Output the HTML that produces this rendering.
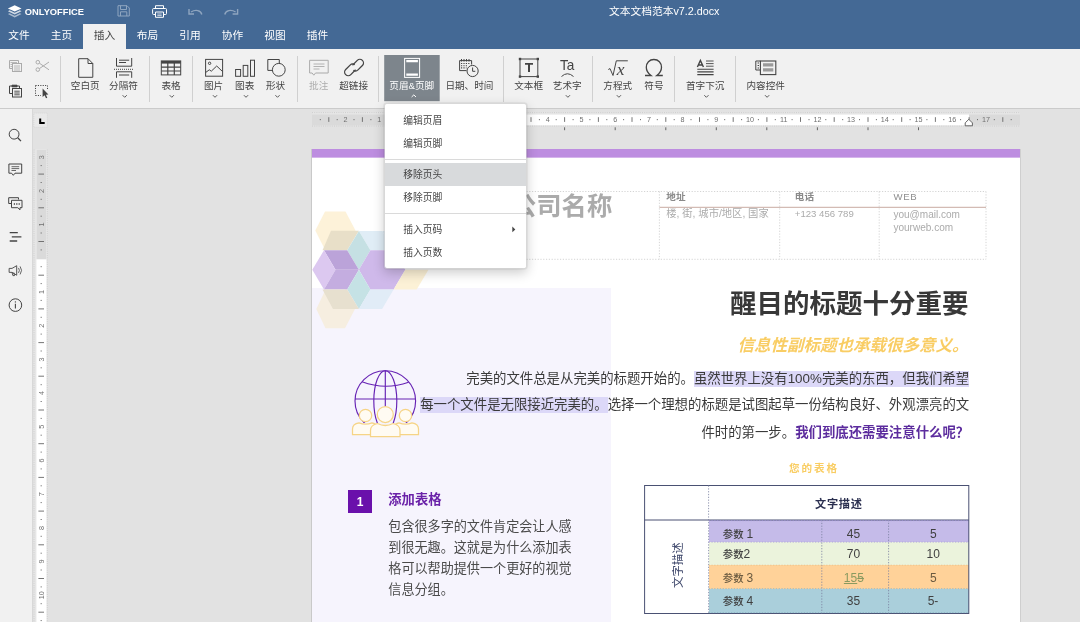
<!DOCTYPE html>
<html lang="zh-CN">
<head>
<meta charset="utf-8">
<title>文本文档范本v7.2.docx</title>
<style>
*{box-sizing:border-box;margin:0;padding:0}
html,body{width:1080px;height:622px;overflow:hidden;background:#e2e2e2}
body{position:relative;font-family:"Liberation Sans","Noto Sans CJK SC",sans-serif;color:#444;font-size:9.6px}
.abs{position:absolute}
#hdr{left:0;top:0;width:1080px;height:49px;background:#446995}
#title{left:0;top:4.3px;width:1080px;padding-left:248.4px;text-align:center;color:#fff;font-size:10.75px;line-height:14px;white-space:nowrap}
.tab{top:24px;height:25px;line-height:23px;color:#fff;font-size:10.7px;text-align:center;white-space:nowrap}
.tab.act{background:#f1f1f1;color:#444}
#tb{left:0;top:49px;width:1080px;height:60px;background:#f1f1f1;border-bottom:1px solid #cbcbcb}
.sep{top:56px;width:1px;height:46px;background:#d8d8d8}
.lbl{top:79.7px;font-size:9.6px;line-height:12px;text-align:center;white-space:nowrap;color:#444;transform:translateX(-50%)}
.car{top:95px;width:7px;height:5px;transform:translateX(-50%)}
.ic{overflow:visible}
#left{left:0;top:109px;width:32.5px;height:513px;background:#f1f1f1;border-right:1px solid #d8d8d8}
#page{left:312px;top:149px;width:708px;height:473px;background:#fff;overflow:hidden}
.doc{font-family:"Liberation Sans","Noto Sans CJK SC",sans-serif;white-space:nowrap}
.para{right:50.8px;text-align:right;font-size:13.4px;line-height:18px;color:#3a3a3a}
.hl{background:#dcd8f8;padding:0 0 1px 0}
.body{left:76.3px;font-size:13.1px;line-height:18px;color:#4a4a4a}
.cell{font-size:10.4px;line-height:12px;color:#404040;font-weight:500}
.num{font-size:12px;line-height:14px;color:#404040;transform:translateX(-50%)}
#menu{left:384px;top:103px;width:143px;height:166px;background:#fff;border:1px solid rgba(255,255,255,.45);border-radius:3px;box-shadow:0 4px 12px rgba(0,0,0,.2),0 0 1.5px rgba(0,0,0,.25);background-clip:padding-box}
.mi{left:0;width:141px;height:23px;line-height:23.6px;padding-left:18.3px;font-size:9.75px;color:#444;white-space:nowrap}
.msep{left:0;width:141px;height:1px;background:#dadada}
</style>
</head>
<body>
<div id="root" class="abs" style="left:0;top:0;width:1080px;height:622px;will-change:transform">
<!-- document canvas -->
<div id="page" class="abs doc">
<div class="abs" style="left:0;top:0;width:708px;height:9px;background:#bd8de0;border-bottom:1px solid #d5b5eb"></div>
<div class="abs" style="left:0;top:139.3px;width:298.7px;height:340px;background:#f6f4fd"></div>
<!-- hex logo -->
<svg class="abs ic" style="left:0;top:0" width="140" height="200" viewBox="312 149 140 200" stroke="none">
<polygon fill="#fdf2d9" points="325,211.5 345.5,211.5 355.5,230.5 345.5,249.8 325,249.8 315.3,230.5"/>
<polygon fill="#e8dfc8" points="331,230.7 358.9,230.7 347.2,250.2 322.5,250.2"/>
<polygon fill="#e0edf6" points="358.9,230.9 382.1,230.9 393.6,250.2 370.4,250.2"/>
<polygon fill="#e0edf6" points="382.1,230.9 405.3,230.9 416.7,250.2 393.6,250.2"/>
<polygon fill="#c5e0e3" points="358.9,230.9 370.4,250.2 358.9,269.8 347.2,250.2"/>
<polygon fill="#cfb9ea" points="370.4,250.2 393.6,250.2 405.3,269.8 393.6,289.4 370.4,289.4 358.9,269.8"/>
<polygon fill="#fcf1d6" points="405.3,269.8 428.4,269.8 416.7,289.4 393.6,289.4"/>
<polygon fill="#bba3d9" points="324,250.2 347.2,250.2 358.9,269.8 335.5,269.8"/>
<polygon fill="#dcc8f0" points="324,250.2 335.5,269.8 324,289.4 312.3,269.8"/>
<polygon fill="#c4ade0" points="335.5,269.8 358.9,269.8 347.2,289.4 324,289.4"/>
<polygon fill="#c5e2e5" points="358.9,269.8 370.4,289.4 358.9,309 347.2,289.4"/>
<polygon fill="#e1ecf7" points="370.4,289.4 393.6,289.4 382.1,309 358.9,309"/>
<polygon fill="#f6eee0" points="325.5,289.8 345,289.8 355,309 345,328.2 325.5,328.2 316.3,309"/>
<polygon fill="#e7e0cf" points="322.5,289.4 347.2,289.4 358.9,309 333,309"/>
</svg>
<!-- header -->
<div class="abs" style="left:199px;top:41px;font-size:25.3px;line-height:32px;color:#ababab;font-weight:700">公司名称</div>
<svg class="abs ic" style="left:0;top:0" width="708" height="120" viewBox="312 149 708 120" fill="none" stroke="#c9c9c9" stroke-width=".8" stroke-dasharray="1.2 1.6">
<path d="M420 191.5 H986 M420 259.3 H986 M659.4 191.5 V259.3 M779.7 191.5 V259.3 M879.2 191.5 V259.3 M986 191.5 V259.3"/>
<path d="M659.4 207.3 H986" stroke="#c8aaa2" stroke-dasharray="none" stroke-width="1"/>
</svg>
<div class="abs" style="left:354.3px;top:42px;font-size:9.6px;line-height:12px;color:#8a8a8a;font-weight:bold">地址</div>
<div class="abs" style="left:482.8px;top:42px;font-size:9.6px;line-height:12px;color:#8a8a8a;font-weight:bold">电话</div>
<div class="abs" style="left:581.4px;top:42px;font-size:9.6px;line-height:12px;color:#8f8f8f;letter-spacing:.7px">WEB</div>
<div class="abs" style="left:354.3px;top:59px;font-size:10.3px;line-height:12px;color:#ababab">楼, 街, 城市/地区, 国家</div>
<div class="abs" style="left:482.8px;top:59px;font-size:9.6px;line-height:12px;color:#ababab">+123 456 789</div>
<div class="abs" style="left:581.4px;top:58.5px;font-size:10.05px;line-height:13px;color:#ababab">you@mail.com<br>yourweb.com</div>
<!-- title -->
<div class="abs" style="right:51.5px;top:137.3px;font-size:26.5px;line-height:36px;font-weight:bold;color:#383838;text-align:right">醒目的标题十分重要</div>
<div class="abs" style="right:51.5px;top:184px;font-size:16.5px;line-height:24px;font-weight:bold;font-style:italic;color:#f9cd64;text-align:right">信息性副标题也承载很多意义。</div>
<div class="abs para" style="top:220.6px">完美的文件总是从完美的标题开始的。<span class="hl">虽然世界上没有100%完美的东西，但我们希望</span></div>
<div class="abs para" style="top:247.3px"><span class="hl">每一个文件是无限接近完美的。</span>选择一个理想的标题是试图起草一份结构良好、外观漂亮的文</div>
<div class="abs para" style="top:274.5px">件时的第一步。<b style="color:#5c2c9e">我们到底还需要注意什么呢？</b></div>
<!-- globe icon -->
<svg class="abs ic" style="left:36px;top:216px" width="76" height="76" viewBox="348 365 76 76" fill="none" stroke="#6622b4" stroke-width="1.15">
<clipPath id="gc"><rect x="348" y="365" width="76" height="58"/></clipPath><g clip-path="url(#gc)"><circle cx="385.3" cy="401" r="30.3"/><ellipse cx="385.3" cy="401" rx="11.5" ry="30.3"/><path d="M385.3 370.7 V431 M355 399 H415.6 M362 381.8 Q385.3 390.5 408.6 382.2"/></g>
<g stroke="#f6d486" fill="#fffbf2" stroke-width="1.25">
<circle cx="365.5" cy="415.5" r="6.2"/><path d="M352.5 434.5 V429 Q352.5 423.8 359 422.8 Q365.5 425.5 372 422.8 Q376 423.5 377.5 427 V434.5 Z"/>
<circle cx="405.5" cy="415.5" r="6.2"/><path d="M393.5 434.5 V427 Q395 423.5 399 422.8 Q405.5 425.5 412 422.8 Q418.5 423.8 418.5 429 V434.5 Z"/>
<circle cx="385.3" cy="414.5" r="8"/><path d="M370.5 436.5 V430.5 Q370.5 425 377.5 423.5 Q385.3 427.5 393 423.5 Q400 425 400 430.5 V436.5 Z"/>
</g>
</svg>
<!-- section 1 -->
<div class="abs" style="left:36.3px;top:341px;width:23.4px;height:23.3px;background:#6a10ab;color:#fff;font-weight:bold;font-size:12px;line-height:25.4px;text-align:center">1</div>
<div class="abs" style="left:76.3px;top:341.5px;font-size:13.3px;line-height:18px;font-weight:bold;color:#6a22a8">添加表格</div>
<div class="abs body" style="top:368.8px">包含很多字的文件肯定会让人感</div>
<div class="abs body" style="top:390.1px">到很无趣。这就是为什么添加表</div>
<div class="abs body" style="top:411.1px">格可以帮助提供一个更好的视觉</div>
<div class="abs body" style="top:432.1px">信息分组。</div>
<!-- table -->
<div class="abs" style="left:477px;top:313.1px;font-size:10.6px;line-height:13px;font-weight:bold;color:#f9cd62;letter-spacing:1.9px">您的表格</div>
<div class="abs" style="left:396.6px;top:371.2px;width:260.2px;height:22px;background:#c5bbe9"></div>
<div class="abs" style="left:396.6px;top:393.2px;width:260.2px;height:23px;background:#ebf3dc"></div>
<div class="abs" style="left:396.6px;top:416.2px;width:260.2px;height:23.4px;background:#ffd299"></div>
<div class="abs" style="left:396.6px;top:439.6px;width:260.2px;height:24.6px;background:#aacfdb"></div>
<svg class="abs ic" style="left:0;top:300px" width="708" height="173" viewBox="312 449 708 173" fill="none" stroke="#4a5173" stroke-width="1">
<rect x="644.6" y="485.5" width="324.2" height="128"/>
<path d="M644.6 520 H968.8"/>
<path d="M708.6 485.5 V613.5 M821.8 520 V613.5 M888.6 520 V613.5" stroke-dasharray="1.3 1.5" stroke-width=".8" stroke="#7a80a0"/>
<path d="M708.6 520.6 H968.8" stroke="#9a8fd0" stroke-dasharray="1.3 1.5" stroke-width=".8"/>
<path d="M708.6 542.1 H968.8" stroke="#a9a0d8" stroke-dasharray="1.3 1.5" stroke-width=".8"/>
<path d="M708.6 565.2 H968.8" stroke="#e8c08a" stroke-dasharray="1.3 1.5" stroke-width=".8"/>
<path d="M708.6 588.6 H968.8" stroke="#90b8c8" stroke-dasharray="1.3 1.5" stroke-width=".8"/>
<path d="M708.6 612.6 H968.8" stroke="#8ab0c0" stroke-dasharray="1.3 1.5" stroke-width=".8"/>
</svg>
<div class="abs" style="left:503px;top:346.9px;font-size:11.2px;line-height:16px;font-weight:bold;color:#2b3050;letter-spacing:.7px">文字描述</div>
<div class="abs" style="left:343.9px;top:410.5px;width:44px;height:12px;text-align:center;font-size:11.4px;line-height:12px;color:#3b4468;transform:rotate(-90deg)">文字描述</div>
<div class="abs cell" style="left:410.8px;top:378.7px">参数 <span style="font-size:12px">1</span></div>
<div class="abs cell" style="left:410.8px;top:399.4px">参数<span style="font-size:12px">2</span></div>
<div class="abs cell" style="left:410.8px;top:422.7px;color:#6a5a40">参数 <span style="font-size:12px">3</span></div>
<div class="abs cell" style="left:410.8px;top:446.1px">参数 <span style="font-size:12px">4</span></div>
<div class="abs num" style="left:541.4px;top:377.7px">45</div>
<div class="abs num" style="left:541.4px;top:398.4px">70</div>
<div class="abs num" style="left:541.9px;top:421.7px;color:#8a9a60"><span style="text-decoration:underline">15</span><span style="text-decoration:line-through">5</span></div>
<div class="abs num" style="left:541.4px;top:445.1px">35</div>
<div class="abs num" style="left:621.3px;top:377.7px">5</div>
<div class="abs num" style="left:621.3px;top:398.4px">10</div>
<div class="abs num" style="left:621.3px;top:421.7px;color:#6a5a40">5</div>
<div class="abs num" style="left:621px;top:445.1px">5-</div>
</div>
<div class="abs" style="left:311px;top:149px;width:1px;height:473px;background:#c9c9c9"></div>
<div class="abs" style="left:1020px;top:149px;width:1px;height:473px;background:#cfcfcf"></div>
<!-- header -->
<div id="hdr" class="abs"></div>
<div id="title" class="abs">文本文档范本v7.2.docx</div>
<div class="abs tab" style="left:-1px;width:40px">文件</div>
<div class="abs tab" style="left:40.5px;width:42px">主页</div>
<div class="abs tab act" style="left:83px;width:43px">插入</div>
<div class="abs tab" style="left:126px;width:43px">布局</div>
<div class="abs tab" style="left:169px;width:42px">引用</div>
<div class="abs tab" style="left:211px;width:43px">协作</div>
<div class="abs tab" style="left:254px;width:42px">视图</div>
<div class="abs tab" style="left:296px;width:43px">插件</div>
<!-- toolbar -->
<div id="tb" class="abs"></div>

<svg class="abs ic" style="left:0;top:0" width="1080" height="108" viewBox="0 0 1080 108" fill="none" stroke="#444" stroke-width="1">
<!-- logo -->
<g stroke="none" fill="#fff">
<path d="M14.7 5.2 L21.5 8.4 L14.7 11.6 L7.9 8.4 Z"/>
<path opacity=".75" d="M9.6 10.3 L7.9 11.2 L14.7 14.4 L21.5 11.2 L19.8 10.3 L14.7 12.8 Z"/>
<path opacity=".55" d="M9.6 13.2 L7.9 14.1 L14.7 17.4 L21.5 14.1 L19.8 13.2 L14.7 15.7 Z"/>
</g>
<!-- save (dim) -->
<g stroke="#fff" opacity=".4">
<path d="M118 5.7 H127 L129.3 8 V16 H118 Z"/><path d="M120.5 5.7 V9.5 H126.5 V5.7"/><path d="M120.5 16 V11.8 H126.8 V16"/>
</g>
<!-- print -->
<g stroke="#fff">
<path d="M155.5 8.5 V5.7 H163.5 V8.5"/><rect x="152.6" y="8.5" width="13.9" height="6" rx="1"/><path fill="#446995" d="M155.5 12 H163.5 V17.3 H155.5 Z"/><path d="M157.3 14 H161.7 M157.3 15.6 H161.7" stroke-width=".7"/>
</g>
<!-- undo / redo (dim) -->
<g stroke="#fff" opacity=".4" stroke-width="1.4">
<path d="M201.8 14.5 C201 10.2 195.5 9.2 191 12"/><path d="M189 9 V14 H194" fill="none"/>
<path d="M224.8 14.5 C225.6 10.2 231.1 9.2 235.6 12"/><path d="M237.6 9 V14 H232.6" fill="none"/>
</g>

<!-- small buttons -->
<g opacity=".4">
<path d="M9.5 60.5 H18.5 V63 M12 68.5 H9.5 V60.5" /><path d="M10.5 62.5 H17 M10.5 64.5 H12 M10.5 66.5 H12" stroke-width=".8"/>
<rect x="12.5" y="63.5" width="9" height="8"/><path d="M14 66 H20 M14 68 H20 M14 70 H20" stroke-width=".8"/>
<circle cx="37.8" cy="62.2" r="1.8"/><circle cx="37.8" cy="69.6" r="1.8"/><path d="M39.4 63.2 L49 69.8 M39.4 68.6 L49 62"/>
</g>
<g>
<path d="M12 93.5 H9.5 V86 H19.5 V88.5"/><path d="M12 85.2 H17 V86.8 H12 Z" fill="#444"/>
<rect x="12.5" y="88.5" width="9" height="8.5"/><path d="M14.3 91.2 H19.7 M14.3 93 H19.7 M14.3 94.8 H19.7" stroke-width=".9"/>
<path d="M35.5 85.5 H47.5 M35.5 85.5 V95.5 M35.5 95.5 H41 M47.5 85.5 V89" stroke-dasharray="1.1 1.3"/>
<path d="M42.6 88.6 V97 L44.6 95.2 L46 98.3 L47.3 97.7 L45.9 94.7 L48.4 94.5 Z" fill="#444" stroke="none"/>
</g>

<!-- blank page -->
<path d="M78.7 58.7 H88 L92.8 63.5 V77.3 H78.7 Z M88 58.7 V63.5 H92.8"/>
<!-- page break -->
<path d="M116.5 58 V66.2 H131.7 V58 M119 60.2 H129.2 M119 62.5 H126"/>
<path d="M114 69.3 H134" stroke-dasharray="1 1"/>
<path d="M116.5 77.8 V71.8 H131.7 V77.8 M119 75 H129.2"/>
<!-- table -->
<rect x="161.3" y="60.9" width="19.4" height="14"/><path d="M161.3 62.3 H180.7" stroke-width="2.6"/><path d="M161.3 67.1 H180.7 M161.3 71 H180.7 M167.8 63 V75 M174.3 63 V75" stroke-width="1.2"/>
<!-- image -->
<rect x="205.6" y="59.4" width="17" height="16.8"/><circle cx="209.6" cy="63.3" r="1.2"/><path d="M205.6 72.5 L209.3 69.8 L211.3 71.2 L216.7 66 L222.6 71.6"/>
<!-- chart -->
<rect x="235.6" y="69.5" width="5" height="6.8"/><rect x="243.2" y="65.4" width="4.6" height="10.9"/><rect x="250.5" y="60.2" width="4" height="16.1"/>
<!-- shape -->
<path d="M272.2 70.4 H267.8 V59.5 H279.3 V63"/><circle cx="278.8" cy="69.8" r="6.4"/>
<!-- comment (disabled) -->
<g opacity=".4"><path d="M309.6 60.3 H328.2 V73 H315.5 L313.8 75.2 L312.1 73 H309.6 Z"/><path d="M313.5 64 H324.5 M313.5 66.5 H324.5 M313.5 69 H319.5" stroke-width=".9"/></g>
<!-- link -->
<g stroke-width="1.3"><path d="M352.5 65.2 L357.3 60.4 A3.6 3.6 0 0 1 362.4 65.5 L358 69.9 A3.6 3.6 0 0 1 353.4 70.3"/><path d="M355.6 69.8 L350.8 74.6 A3.6 3.6 0 0 1 345.7 69.5 L350.1 65.1 A3.6 3.6 0 0 1 354.7 64.7"/></g>
<!-- header/footer active -->
<rect x="384.2" y="55" width="55.5" height="46.2" fill="#7d858c" stroke="none"/>
<rect x="404.6" y="58.4" width="15" height="19" stroke="#fff"/><path d="M406.3 61.2 H417.9 M406.3 74.6 H417.9" stroke="#fff" stroke-width="2.2"/>
<!-- date & time -->
<path d="M459.6 60.6 H471.6 V64.5 M459.6 60.6 V70.6 H466.5"/><path d="M461.5 59 V61.5 M464 59 V61.5 M466.5 59 V61.5 M469 59 V61.5"/><path d="M461 63.5 H470.5 M461 65.7 H468 M461 67.9 H466.5" stroke-dasharray="1.2 1.2" stroke-width="1.1"/>
<circle cx="472.6" cy="71" r="5.6" fill="#f1f1f1"/><path d="M472.6 67.5 V71.3 H475.3"/>
<!-- text box -->
<rect x="520" y="59" width="17.8" height="17.6"/><g fill="#444" stroke="none"><rect x="518.8" y="57.8" width="2.4" height="2.4"/><rect x="536.6" y="57.8" width="2.4" height="2.4"/><rect x="518.8" y="75.4" width="2.4" height="2.4"/><rect x="536.6" y="75.4" width="2.4" height="2.4"/><path d="M525 63 H533 V64.8 H530 V72 H528 V64.8 H525 Z"/></g>
<!-- text art -->
<path d="M561.5 76.5 Q567.4 71 573.5 76.5"/>
<!-- equation -->
<path d="M608.3 69.5 L610 68.6 L613 75.5 L616.3 60.8 H627.8"/>
<!-- omega -->
<path d="M645 75.5 H651 C647.5 73 646.3 70.5 646.3 67.3 C646.3 62.7 649.4 59.5 653.9 59.5 C658.4 59.5 661.5 62.7 661.5 67.3 C661.5 70.5 660.3 73 656.8 75.5 H662.8" stroke-width="1.3"/>
<!-- drop cap -->
<path d="M706 61 H713.6 M706 63.6 H713.6 M706 66.2 H713.6" stroke-width=".9"/><path d="M697.3 69.2 H713.6 M697.3 71.9 H713.6 M697.3 74.6 H713.6" stroke-width="1.1"/>
<path d="M697.4 67 L700.4 60.4 L703.4 67 M698.5 65 H702.3" stroke-width="1.4"/>
<!-- content control -->
<path d="M760.4 70 H755.8 V61 H760.4"/><path d="M757.6 63 H759 M757.6 65.5 H759 M757.6 68 H759" stroke-width="1.2"/><rect x="760.4" y="61" width="15.4" height="13.6" stroke-width="1.1"/><path d="M763 64.8 H773.3 M763 69.8 H773.3" stroke="#9a9a9a" stroke-width="3.2"/>
<!-- separators -->
<g stroke="#d0d0d0"><path d="M60.5 56 V102 M149.5 56 V102 M192.5 56 V102 M297.5 56 V102 M378.5 56 V102 M503.5 56 V102 M592.5 56 V102 M674.5 56 V102 M735.5 56 V102"/></g>
<!-- carets -->
<g stroke-width="1" stroke="#5a5a5a"><path d="M122.6 95.2 L124.7 97.3 L126.8 95.2"/><path d="M169.7 95.2 L171.8 97.3 L173.9 95.2"/><path d="M212.9 95.2 L215.0 97.3 L217.1 95.2"/><path d="M243.9 95.2 L246.0 97.3 L248.1 95.2"/><path d="M275.4 95.2 L277.5 97.3 L279.6 95.2"/><path d="M565.8 95.2 L567.9 97.3 L570.0 95.2"/><path d="M616.8 95.2 L618.9 97.3 L621.0 95.2"/><path d="M704.3 95.2 L706.4 97.3 L708.5 95.2"/><path d="M765.0 95.2 L767.1 97.3 L769.2 95.2"/><path d="M411.6 97 L413.8 94.9 L416 97" stroke="#fff"/></g>
<text x="24.8" y="14.8" fill="#fff" stroke="none" font-family="Liberation Sans, sans-serif" font-weight="bold" font-size="9.2" textLength="59.3" lengthAdjust="spacingAndGlyphs">ONLYOFFICE</text>
<text x="560" y="70.3" fill="#444" stroke="none" font-family="Liberation Sans, sans-serif" font-size="14.5" textLength="14.4" lengthAdjust="spacingAndGlyphs">Ta</text>
<text x="616.8" y="75.3" fill="#444" stroke="none" font-family="Liberation Serif, serif" font-style="italic" font-size="17.5">x</text>
</svg>
<div class="abs lbl" style="left:85.2px">空白页</div>
<div class="abs lbl" style="left:123.5px">分隔符</div>
<div class="abs lbl" style="left:171px">表格</div>
<div class="abs lbl" style="left:213.5px">图片</div>
<div class="abs lbl" style="left:244.7px">图表</div>
<div class="abs lbl" style="left:275.5px">形状</div>
<div class="abs lbl" style="left:318.7px;opacity:.4">批注</div>
<div class="abs lbl" style="left:353.6px">超链接</div>
<div class="abs lbl" style="left:411.7px;color:#fff">页眉&amp;页脚</div>
<div class="abs lbl" style="left:469.4px">日期、时间</div>
<div class="abs lbl" style="left:528.6px">文本框</div>
<div class="abs lbl" style="left:567.2px">艺术字</div>
<div class="abs lbl" style="left:617.7px">方程式</div>
<div class="abs lbl" style="left:653.9px">符号</div>
<div class="abs lbl" style="left:705.2px">首字下沉</div>
<div class="abs lbl" style="left:765.7px">内容控件</div>
<!-- left panel -->
<div id="left" class="abs"></div>

<svg class="abs ic" style="left:0;top:108px" width="32" height="514" viewBox="0 108 32 514" fill="none" stroke="#444" stroke-width="1">
<circle cx="14.1" cy="134.2" r="4.9"/><path d="M17.7 137.8 L21 141.1" stroke-width="1.3"/>
<path d="M8.9 164 H21.7 V173.2 H15 L13.3 175.3 L11.6 173.2 H8.9 Z"/><path d="M11.5 166.7 H19.2 M11.5 168.6 H19.2 M11.5 170.5 H16" stroke-width=".8"/>
<path d="M11 203.5 H8.7 V197.7 H18.5 V199.5"/><path d="M11.5 200.3 H22 V207.7 H20 V209.8 L17.8 207.7 H11.5 Z"/><path d="M13.8 204 H15 M16.2 204 H17.4 M18.6 204 H19.8" stroke-width="1.4"/>
<path d="M9.7 232.6 H17.8 M11.8 236.8 H21.4 M9.7 241 H17.2" stroke-width="1.3"/>
<g transform="translate(1.4 26.3) scale(.9)"><path d="M8.6 269 H11.8 L17 266 V276.6 L11.8 273.4 H8.6 Z"/><path d="M11.8 273.4 L12.8 277 H14.6 L13.8 273.6"/><path d="M19 268.5 Q21 271.2 19 274 M20.8 266.8 Q24 271.2 20.8 275.7" stroke-width=".9"/></g>
<circle cx="15.4" cy="305.1" r="6.3"/><path d="M15.4 303.8 V308.6" stroke-width="1.1"/><circle cx="15.4" cy="301.9" r=".7" fill="#444" stroke="none"/>
</svg>
<svg id="rulers" class="abs ic" style="left:0;top:108px" width="1080" height="514" viewBox="0 108 1080 514" fill="none" stroke="#555" stroke-width="1" font-family="Liberation Sans, sans-serif" font-size="7.2">
<rect x="312" y="112.2" width="708" height="14.2" fill="#e6e6e6" stroke="none"/>
<rect x="312" y="114.5" width="708" height="10.900000000000006" fill="#dadada" stroke="none"/>
<rect x="413.0" y="114.5" width="556.0" height="10.9" fill="#fff" stroke="none"/>
<path d="M312 112.6 H1020 M312 126.1 H1020" stroke="#c4c4c4" stroke-dasharray="1 1.2" stroke-width=".7"/>
<path d="M328.8 117.2 V121.9 M362.4 117.2 V121.9 M396.1 117.2 V121.9 M429.9 117.2 V121.9 M463.6 117.2 V121.9 M497.2 117.2 V121.9 M531.0 117.2 V121.9 M564.6 117.2 V121.9 M598.4 117.2 V121.9 M632.0 117.2 V121.9 M665.8 117.2 V121.9 M699.5 117.2 V121.9 M733.2 117.2 V121.9 M766.9 117.2 V121.9 M800.5 117.2 V121.9 M834.2 117.2 V121.9 M868.0 117.2 V121.9 M901.7 117.2 V121.9 M935.4 117.2 V121.9 M969.1 117.2 V121.9 M1002.8 117.2 V121.9" stroke="#666" stroke-width=".9"/>
<path d="M320.3 119 V120.2 M337.2 119 V120.2 M354.0 119 V120.2 M370.9 119 V120.2 M387.7 119 V120.2 M404.6 119 V120.2 M421.4 119 V120.2 M438.3 119 V120.2 M455.1 119 V120.2 M472.0 119 V120.2 M488.8 119 V120.2 M505.7 119 V120.2 M522.5 119 V120.2 M539.4 119 V120.2 M556.2 119 V120.2 M573.1 119 V120.2 M589.9 119 V120.2 M606.8 119 V120.2 M623.6 119 V120.2 M640.5 119 V120.2 M657.3 119 V120.2 M674.2 119 V120.2 M691.0 119 V120.2 M707.9 119 V120.2 M724.7 119 V120.2 M741.6 119 V120.2 M758.4 119 V120.2 M775.3 119 V120.2 M792.1 119 V120.2 M809.0 119 V120.2 M825.8 119 V120.2 M842.7 119 V120.2 M859.5 119 V120.2 M876.4 119 V120.2 M893.2 119 V120.2 M910.1 119 V120.2 M926.9 119 V120.2 M943.8 119 V120.2 M960.6 119 V120.2 M977.5 119 V120.2 M994.3 119 V120.2 M1011.2 119 V120.2" stroke="#666" stroke-width=".9"/>
<g fill="#707070" stroke="none"><text x="345.6" y="122.1" text-anchor="middle">2</text><text x="379.3" y="122.1" text-anchor="middle">1</text><text x="446.7" y="122.1" text-anchor="middle">1</text><text x="480.4" y="122.1" text-anchor="middle">2</text><text x="514.1" y="122.1" text-anchor="middle">3</text><text x="547.8" y="122.1" text-anchor="middle">4</text><text x="581.5" y="122.1" text-anchor="middle">5</text><text x="615.2" y="122.1" text-anchor="middle">6</text><text x="648.9" y="122.1" text-anchor="middle">7</text><text x="682.6" y="122.1" text-anchor="middle">8</text><text x="716.3" y="122.1" text-anchor="middle">9</text><text x="750.0" y="122.1" text-anchor="middle">10</text><text x="783.7" y="122.1" text-anchor="middle">11</text><text x="817.4" y="122.1" text-anchor="middle">12</text><text x="851.1" y="122.1" text-anchor="middle">13</text><text x="884.8" y="122.1" text-anchor="middle">14</text><text x="918.5" y="122.1" text-anchor="middle">15</text><text x="952.2" y="122.1" text-anchor="middle">16</text><text x="985.9" y="122.1" text-anchor="middle">17</text></g>
<path d="M463.6 127.3 V130.2 M514.1 127.3 V130.2 M564.6 127.3 V130.2 M615.2 127.3 V130.2 M665.8 127.3 V130.2 M716.3 127.3 V130.2 M766.8 127.3 V130.2 M817.4 127.3 V130.2 M868.0 127.3 V130.2 M918.5 127.3 V130.2" stroke="#555" stroke-width=".9"/>
<path d="M965.2 125.8 V122.9 L968.8 119.3 L972.4 122.9 V125.8 Z" fill="#fff" stroke="#555" stroke-width=".9"/>
<rect x="33.8" y="113" width="13.6" height="14.4" fill="#e9e9e9" stroke="#cfcfcf" stroke-width=".6" stroke-dasharray="1 1"/>
<path d="M40.2 118.5 V123 H44.7" stroke="#000" stroke-width="2"/>
<rect x="33.6" y="149.5" width="14" height="473" fill="#e6e6e6" stroke="none"/>
<rect x="36.4" y="149.5" width="10.1" height="473" fill="#fff" stroke="none"/>
<rect x="36.4" y="149.5" width="10.1" height="109.8" fill="#dadada" stroke="none"/>
<path d="M34 149.5 V622 M47.3 149.5 V622" stroke="#c4c4c4" stroke-dasharray="1 1.2" stroke-width=".7"/>
<path d="M38.4 174.1 H44 M38.4 207.8 H44 M38.4 241.5 H44 M38.4 275.2 H44 M38.4 308.9 H44 M38.4 342.6 H44 M38.4 376.2 H44 M38.4 410.0 H44 M38.4 443.7 H44 M38.4 477.4 H44 M38.4 511.1 H44 M38.4 544.8 H44 M38.4 578.5 H44 M38.4 612.2 H44" stroke="#666" stroke-width=".9"/>
<path d="M40.6 165.6 H41.8 M40.6 182.5 H41.8 M40.6 199.3 H41.8 M40.6 216.2 H41.8 M40.6 233.0 H41.8 M40.6 249.9 H41.8 M40.6 266.7 H41.8 M40.6 283.6 H41.8 M40.6 300.4 H41.8 M40.6 317.3 H41.8 M40.6 334.1 H41.8 M40.6 351.0 H41.8 M40.6 367.8 H41.8 M40.6 384.7 H41.8 M40.6 401.5 H41.8 M40.6 418.4 H41.8 M40.6 435.2 H41.8 M40.6 452.1 H41.8 M40.6 468.9 H41.8 M40.6 485.8 H41.8 M40.6 502.6 H41.8 M40.6 519.5 H41.8 M40.6 536.3 H41.8 M40.6 553.2 H41.8 M40.6 570.0 H41.8 M40.6 586.9 H41.8 M40.6 603.7 H41.8 M40.6 620.6 H41.8" stroke="#666" stroke-width=".9"/>
<g fill="#707070" stroke="none"><text transform="translate(44 157.2) rotate(-90)" text-anchor="middle">3</text><text transform="translate(44 190.9) rotate(-90)" text-anchor="middle">2</text><text transform="translate(44 224.6) rotate(-90)" text-anchor="middle">1</text><text transform="translate(44 292.0) rotate(-90)" text-anchor="middle">1</text><text transform="translate(44 325.7) rotate(-90)" text-anchor="middle">2</text><text transform="translate(44 359.4) rotate(-90)" text-anchor="middle">3</text><text transform="translate(44 393.1) rotate(-90)" text-anchor="middle">4</text><text transform="translate(44 426.8) rotate(-90)" text-anchor="middle">5</text><text transform="translate(44 460.5) rotate(-90)" text-anchor="middle">6</text><text transform="translate(44 494.2) rotate(-90)" text-anchor="middle">7</text><text transform="translate(44 527.9) rotate(-90)" text-anchor="middle">8</text><text transform="translate(44 561.6) rotate(-90)" text-anchor="middle">9</text><text transform="translate(44 595.3) rotate(-90)" text-anchor="middle">10</text></g>
</svg>
<!-- menu -->
<div id="menu" class="abs">
<div class="abs mi" style="top:5px">编辑页眉</div>
<div class="abs mi" style="top:28px">编辑页脚</div>
<div class="abs msep" style="top:55px"></div>
<div class="abs mi" style="top:59px;background:#d8dadc">移除页头</div>
<div class="abs mi" style="top:82px">移除页脚</div>
<div class="abs msep" style="top:109px"></div>
<div class="abs mi" style="top:114px">插入页码</div>
<svg class="abs ic" style="left:127px;top:121.6px" width="4" height="7" viewBox="0 0 4 7"><path d="M0.3 0.6 L3.3 3.4 L0.3 6.2 Z" fill="#444"/></svg>
<div class="abs mi" style="top:137px">插入页数</div>
</div>
</div>
</body>
</html>
